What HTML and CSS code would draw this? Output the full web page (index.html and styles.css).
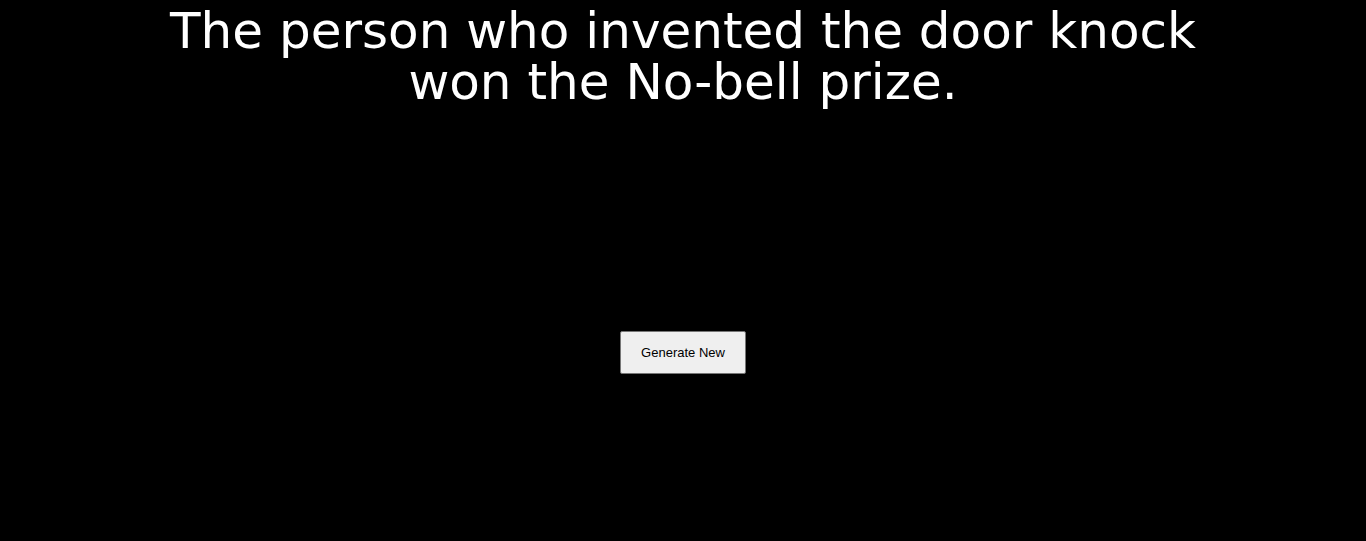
FILE: index.html
```html
<!DOCTYPE html>
<html>
<head>
<meta charset="utf-8">
<link rel="stylesheet" href="styles.css">
</head>
<body>
<main class="page">
  <h1 class="joke">The person who invented the door knock won the No-bell prize.</h1>
  <div class="actions">
    <button class="btn">Generate New</button>
  </div>
</main>
</body>
</html>
```
FILE: styles.css
```css
html, body {
  margin: 0;
  padding: 0;
  background: #000;
  height: 100%;
}
.page {
  display: flex;
  flex-direction: column;
  align-items: center;
}
.joke {
  margin: 6px 0 0;
  width: 1060px;
  text-align: center;
  color: #fff;
  font-family: "DejaVu Sans", sans-serif;
  font-weight: normal;
  font-size: 50px;
  line-height: 51px;
}
.actions {
  margin-top: 223px;
}
.btn {
  width: 126px;
  height: 43px;
  background: #efefef;
  border: 1px solid #767676;
  border-radius: 2px;
  font-family: "Liberation Sans", Arial, sans-serif;
  font-size: 13px;
  color: #000;
  padding: 0;
}
```
